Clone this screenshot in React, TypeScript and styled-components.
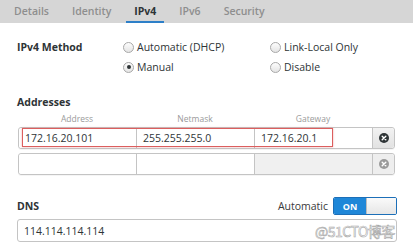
import React from 'react'
import styled, { createGlobalStyle } from 'styled-components'

const GlobalStyle = createGlobalStyle`
	html, body {
		margin: 0;
		padding: 0;
		background: #ffffff;
		font-family: 'Open Sans', 'Noto Sans', sans-serif;
		color: #2e3436;
	}
	* {
		box-sizing: border-box;
	}
`

const tabs = ['Details', 'Identity', 'IPv4', 'IPv6', 'Security']

interface IAddressRow {
	address: string
	netmask: string
	gateway: string
	filled: boolean
}

const rows: IAddressRow[] = [
	{ address: '172.16.20.101', netmask: '255.255.255.0', gateway: '172.16.20.1', filled: true },
	{ address: '', netmask: '', gateway: '', filled: false }
]

function RadioOption (props: { label: string, checked?: boolean }) {
	return (
		<Option>
			<RadioDot checked={!!props.checked} />
			{props.label}
		</Option>
	)
}

function DeleteIcon (props: { active: boolean }) {
	const fill = props.active ? '#2e3436' : '#9a9a9a'
	return (
		<svg width='10' height='10' viewBox='0 0 10 10'>
			<circle cx='5' cy='5' r='5' fill={fill} />
			<path d='M3.2 3.2 L6.8 6.8 M6.8 3.2 L3.2 6.8' stroke='#ffffff' strokeWidth='1.4' strokeLinecap='round' />
		</svg>
	)
}

function App () {
	return (
		<Page>
			<GlobalStyle />
			<TabBar>
				{tabs.map(tab => (
					<Tab key={tab} active={tab === 'IPv4'}>{tab}</Tab>
				))}
			</TabBar>
			<Content>
				<MethodGrid>
					<FieldLabel>IPv4 Method</FieldLabel>
					<RadioOption label='Automatic (DHCP)' />
					<RadioOption label='Link-Local Only' />
					<span />
					<RadioOption label='Manual' checked />
					<RadioOption label='Disable' />
				</MethodGrid>

				<SectionTitle>Addresses</SectionTitle>
				<ColumnHeads>
					<ColumnHead>Address</ColumnHead>
					<ColumnHead>Netmask</ColumnHead>
					<ColumnHead>Gateway</ColumnHead>
				</ColumnHeads>
				<AddressList>
					{rows.map((row, i) => (
						<AddressRow key={i}>
							<Cell>{row.address}</Cell>
							<Cell>{row.netmask}</Cell>
							<Cell disabled={!row.filled}>{row.gateway}</Cell>
							<DeleteButton active={row.filled}>
								<DeleteIcon active={row.filled} />
							</DeleteButton>
							{row.filled && <Highlight />}
						</AddressRow>
					))}
				</AddressList>

				<DnsHeader>
					<HeaderLabel>DNS</HeaderLabel>
					<AutoToggle>
						Automatic
						<Switch>
							<SwitchOn>ON</SwitchOn>
							<SwitchOff />
						</Switch>
					</AutoToggle>
				</DnsHeader>
				<DnsInput>114.114.114.114</DnsInput>
			</Content>
			<Watermark>@51CTO博客</Watermark>
		</Page>
	)
}

const Page = styled.div`
	width: 413px;
	height: 243px;
	position: relative;
	overflow: hidden;
	background: #ffffff;
`
const TabBar = styled.div`
	height: 23px;
	background: #d6d6d6;
	display: flex;
	align-items: stretch;
	padding-left: 6px;
	gap: 7px;
`
const Tab = styled.div<{ active: boolean }>`
	padding: 1px 8px 0;
	display: flex;
	align-items: center;
	font-size: 10.5px;
	font-weight: ${p => p.active ? 700 : 600};
	color: ${p => p.active ? '#2e3436' : '#8e8e8e'};
	border-bottom: 2px solid ${p => p.active ? '#2d7fc8' : 'transparent'};
`
const Content = styled.div`
	padding: 14px 17px 0 17px;
	display: flex;
	flex-direction: column;
`
const MethodGrid = styled.div`
	display: grid;
	grid-template-columns: 106px 147px 1fr;
	grid-auto-rows: 20px;
	align-items: center;
`
const FieldLabel = styled.span`
	font-size: 10.5px;
	font-weight: 700;
`
const Option = styled.label`
	display: flex;
	align-items: center;
	gap: 3px;
	font-size: 10.5px;
	color: #2e3436;
`
const RadioDot = styled.span<{ checked: boolean }>`
	width: 11px;
	height: 11px;
	border-radius: 50%;
	border: 1px solid #a8a8a8;
	background: linear-gradient(#fdfdfd, #e4e4e4);
	position: relative;
	&::after {
		content: '';
		display: ${p => p.checked ? 'block' : 'none'};
		position: absolute;
		left: 2.5px;
		top: 2.5px;
		width: 4px;
		height: 4px;
		border-radius: 50%;
		background: #2e3436;
	}
`
const HeaderLabel = styled.span`
	font-size: 10.5px;
	font-weight: 700;
	line-height: 14px;
`
const SectionTitle = styled(HeaderLabel)`
	display: block;
	margin-top: 18px;
`
const ColumnHeads = styled.div`
	display: flex;
	padding-left: 1px;
	margin-top: 4px;
	width: 355px;
`
const ColumnHead = styled.span`
	flex: 1;
	text-align: center;
	font-size: 8.5px;
	color: #9a9a9a;
	line-height: 11px;
`
const AddressList = styled.div`
	display: flex;
	flex-direction: column;
	gap: 4px;
	margin-top: 3px;
	padding-left: 1px;
`
const AddressRow = styled.div`
	position: relative;
	display: flex;
	width: 377px;
	height: 22px;
	border: 1px solid #c4c4c4;
	border-radius: 3px;
	box-shadow: 0 1px 0 rgba(0, 0, 0, 0.04);
`
const Cell = styled.div<{ disabled?: boolean }>`
	width: 118px;
	display: flex;
	align-items: center;
	padding-left: 6px;
	font-size: 10.5px;
	color: #2e3436;
	border-right: 1px solid #c4c4c4;
	background: ${p => p.disabled ? '#f0f0f0' : '#ffffff'};
	&:first-child {
		border-radius: 3px 0 0 3px;
	}
`
const DeleteButton = styled.div<{ active: boolean }>`
	flex: 1;
	display: flex;
	align-items: center;
	justify-content: center;
	background: ${p => p.active ? 'linear-gradient(#f2f2f2, #e2e2e2)' : '#eeeeee'};
	border-radius: 0 3px 3px 0;
`
const Highlight = styled.div`
	position: absolute;
	left: 3px;
	top: 0;
	width: 311px;
	height: 19px;
	border: 1.5px solid #dc5e5e;
	box-shadow: 0 0 2px rgba(220, 94, 94, 0.5);
	pointer-events: none;
`
const DnsHeader = styled.div`
	display: flex;
	align-items: center;
	justify-content: space-between;
	margin-top: 22px;
	width: 380px;
	height: 18px;
`
const AutoToggle = styled.div`
	display: flex;
	align-items: center;
	gap: 5px;
	font-size: 10.5px;
	color: #3a3a3a;
`
const Switch = styled.div`
	display: flex;
	width: 64px;
	height: 18px;
	border: 1px solid #1c6fb8;
	border-radius: 2px;
	overflow: hidden;
`
const SwitchOn = styled.div`
	width: 32px;
	background: #1f87d8;
	color: #ffffff;
	font-size: 9px;
	font-weight: 700;
	display: flex;
	align-items: center;
	justify-content: center;
`
const SwitchOff = styled.div`
	flex: 1;
	background: linear-gradient(#fafafa, #e6e6e6);
	border-left: 1px solid #bcbcbc;
`
const DnsInput = styled.div`
	margin-top: 4px;
	width: 380px;
	height: 23px;
	border: 1px solid #c4c4c4;
	border-radius: 3px;
	display: flex;
	align-items: center;
	padding-left: 6px;
	font-size: 10.5px;
	color: #2e3436;
`
const Watermark = styled.div`
	position: absolute;
	left: 315px;
	top: 221px;
	font-family: 'Noto Sans CJK SC', sans-serif;
	font-size: 14px;
	color: #ffffff;
	-webkit-text-stroke: 0.6px #a8a8a8;
	letter-spacing: -0.5px;
`

export default App
